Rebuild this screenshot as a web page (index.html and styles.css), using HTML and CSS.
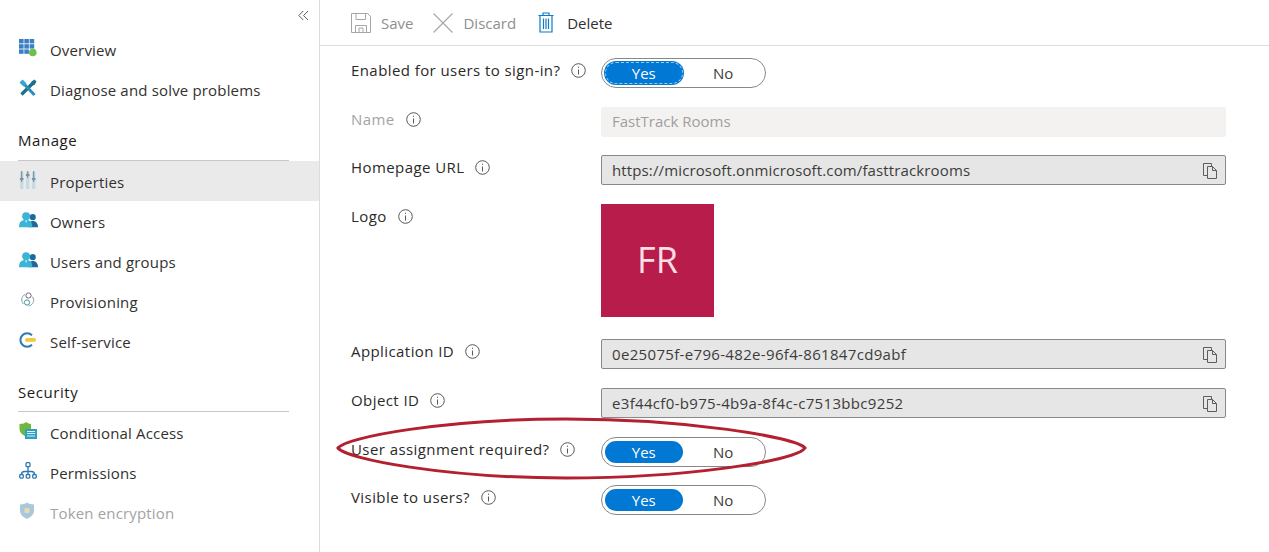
FILE: index.html
```html
<!DOCTYPE html>
<html lang="en">
<head>
<meta charset="utf-8">
<title>Properties</title>
<link rel="stylesheet" href="styles.css">
</head>
<body>
<div class="app">
  <aside class="sidebar">
    <div class="collapse"><svg width="11" height="11" viewBox="0 0 11 11"><path d="M5.200 1 .8 5.500l4.400 4.500M10 1 5.600 5.500 10 10" fill="none" stroke="#605e5c" stroke-width="1"/></svg></div>
    <nav>
      <a class="item"><svg class="ico" viewBox="0 0 18 18"><g fill="#3b80c4"><rect x="0" y="0" width="4.600" height="4.400"/><rect x="5.300" y="0" width="4.600" height="4.400"/><rect x="10.600" y="0" width="4.600" height="4.400"/><rect x="0" y="5.200" width="4.600" height="4.400"/><rect x="5.300" y="5.200" width="4.600" height="4.400"/><rect x="10.600" y="5.200" width="4.600" height="4.400"/><rect x="0" y="10.400" width="4.600" height="4.400"/><rect x="5.300" y="10.400" width="4.600" height="4.400"/></g><circle cx="13.800" cy="13.500" r="3.800" fill="#6fbf4b"/></svg><span>Overview</span></a>
      <a class="item"><svg class="ico" viewBox="0 0 18 18"><path d="M2.500 15.500 14.500 3.500" stroke="#1f6f8b" stroke-width="3.400" fill="none"/><path d="M15.500 16 5 5" stroke="#2a8fb5" stroke-width="3" fill="none"/><path d="M.5 3.500 3.600.5 7.500 4.400 4.400 7.500z" fill="#35a7d0"/><path d="M12.500 2.500 15.500.5l2 2-2 3.500-3 .5z" fill="#1f6f8b"/></svg><span>Diagnose and solve problems</span></a>
      <h2 class="heading">Manage</h2>
      <a class="item active"><svg class="ico" viewBox="0 0 18 18"><g fill="#c5dbe6"><rect x="1" y="1" width="3.400" height="17"/><rect x="7" y="1" width="3.400" height="17"/><rect x="13" y="1" width="3.400" height="17"/></g><g fill="#7d929e"><rect x="2.100" y="0" width="1.200" height="11"/><rect x="8.100" y="0" width="1.200" height="7"/><rect x="14.100" y="0" width="1.200" height="11"/><rect x=".9" y="7" width="3.600" height="2"/><rect x="6.900" y="3" width="3.600" height="2"/><rect x="12.900" y="7" width="3.600" height="2"/></g></svg><span>Properties</span></a>
      <a class="item"><svg class="ico wide" viewBox="0 0 20 18"><use href="#people"/></svg><span>Owners</span></a>
      <a class="item"><svg class="ico wide" viewBox="0 0 20 18"><g id="people"><circle cx="14.500" cy="6" r="3.200" fill="#1d6a9c"/><path d="M10 16.500c0-5 2-6.500 4.500-6.500s5.500 1.500 5.500 6.500z" fill="#1d6a9c"/><circle cx="7.500" cy="5" r="4.200" fill="#3bb4d8"/><path d="M0 16.500c0-6 3-7.500 7.500-7.500S14 11 14 16.500z" fill="#3bb4d8"/><path d="M6.200 9.500h2.600L7.500 12z" fill="#d8f2fa"/></g></svg><span>Users and groups</span></a>
      <a class="item"><svg class="ico" viewBox="0 0 18 18"><circle cx="9.500" cy="4.500" r="2.600" fill="none" stroke="#6b6b8a" stroke-width="1"/><circle cx="8" cy="11.500" r="2.600" fill="none" stroke="#3a9aa8" stroke-width="1"/><path d="M6 3.500C2.500 5 1.500 10 4.500 13M12.500 5c3 2.500 3 6 0 8.500-1 1-2 1-3 1.500" fill="none" stroke="#8a9aa8" stroke-width="1"/></svg><span>Provisioning</span></a>
      <a class="item"><svg class="ico" viewBox="0 0 18 18"><path d="M13 4.200a6.800 6.800 0 1 0 0 9.600" fill="none" stroke="#2b7cb5" stroke-width="2"/><rect x="6" y="7" width="11" height="3.800" rx="1.900" fill="#f0c93a"/></svg><span>Self-service</span></a>
      <h2 class="heading sec">Security</h2>
      <a class="item"><svg class="ico" viewBox="0 0 18 18"><path d="M.5 2C4 2 6 1 7 0c1.500 1 3.500 2 5 2v6c0 2.500-2.500 5-5 6.500C3 13 .5 10 .5 7z" fill="#6fb83f"/><rect x="6" y="7" width="12" height="10" fill="#2f9fc8"/><g fill="#d8f0f8"><rect x="8" y="9" width="8" height="1"/><rect x="8" y="11" width="8" height="1"/><rect x="8" y="13.500" width="8" height="1"/></g></svg><span>Conditional Access</span></a>
      <a class="item"><svg class="ico" viewBox="0 0 18 18"><g fill="none" stroke="#2b77ae" stroke-width="1.300"><rect x="7" y=".7" width="4" height="4" rx="1"/><rect x=".7" y="12.500" width="3.600" height="3.600" rx="1"/><rect x="7.200" y="12.500" width="3.600" height="3.600" rx="1"/><rect x="13.700" y="12.500" width="3.600" height="3.600" rx="1"/><path d="M9 4.700v7.800M2.500 12.500c0-2 1-3 3-3h7c2 0 3 1 3 3"/></g></svg><span>Permissions</span></a>
      <a class="item muted"><svg class="ico" viewBox="0 0 18 18"><path d="M1 2.500C4 2.500 6.500 1.500 8 .5c1.500 1 4 2 7 2v6.500c0 3.500-3.500 6.500-7 8-3.500-1.500-7-4.500-7-8z" fill="#a9c7dd"/><rect x="5.500" y="6" width="5" height="5" rx="1" fill="#e8dca8"/></svg><span>Token encryption</span></a>
    </nav>
  </aside>
  <main class="main">
    <header class="toolbar">
      <button class="tool off"><svg width="20" height="20" viewBox="0 0 20 20"><path d="M.5.500h16l3 3v16H.5zM5 .5v6h9.500V.5M4.500 19.500v-7h11v7M8 19.500V15h4v4.500" fill="none" stroke="#a6a6a6" stroke-width="1"/></svg><span>Save</span></button>
      <button class="tool off"><svg width="20" height="20" viewBox="0 0 20 20"><path d="m.5.500 19 19M19.500.500l-19 19" stroke="#a6a6a6" stroke-width="1.100" fill="none"/></svg><span>Discard</span></button>
      <button class="tool del"><svg width="16" height="21" viewBox="0 0 16 21"><path d="M.5 3.500h15M5 3.500V1h6v2.500M2 3.500V20h12V3.500M5.500 6.500v10.500M8 6.500v10.500M10.500 6.500v10.500" fill="none" stroke="#0f7ac7" stroke-width="1.200"/></svg><span>Delete</span></button>
    </header>
    <form class="form">
      <div class="row r19">
        <div class="label"><span>Enabled for users to sign-in?</span><svg class="info" viewBox="0 0 15 15"><use href="#i"/></svg></div>
        <div class="toggle"><span class="yes focus">Yes</span><span class="no">No</span></div>
      </div>
      <div class="row r18">
        <div class="label dim"><span>Name</span><svg class="info" viewBox="0 0 15 15"><g id="i"><circle cx="7.500" cy="7.500" r="6.800" fill="none" stroke="#484644" stroke-width=".9"/><path d="M7.500 6.500v5M7.500 3.700v1.200" stroke="#484644" stroke-width=".9"/></g></svg></div>
        <div class="field plain">FastTrack Rooms</div>
      </div>
      <div class="row r19">
        <div class="label"><span>Homepage URL</span><svg class="info" viewBox="0 0 15 15"><use href="#i"/></svg></div>
        <div class="field url">https://microsoft.onmicrosoft.com/fasttrackrooms<svg class="copy" viewBox="0 0 14 16"><use href="#c"/></svg></div>
      </div>
      <div class="row r22">
        <div class="label"><span>Logo</span><svg class="info" viewBox="0 0 15 15"><use href="#i"/></svg></div>
        <div class="logo">FR</div>
      </div>
      <div class="row r19">
        <div class="label"><span>Application ID</span><svg class="info" viewBox="0 0 15 15"><use href="#i"/></svg></div>
        <div class="field guid">0e25075f-e796-482e-96f4-861847cd9abf<svg class="copy" viewBox="0 0 14 16"><g id="c" fill="none" stroke="#605e5c" stroke-width="1"><path d="M4 12.500H.5V.5h8v3"/><path d="M4.500 3.500h5l4 4v8h-9zM9.500 3.500v4h4"/></g></svg></div>
      </div>
      <div class="row r19">
        <div class="label"><span>Object ID</span><svg class="info" viewBox="0 0 15 15"><use href="#i"/></svg></div>
        <div class="field guid">e3f44cf0-b975-4b9a-8f4c-c7513bbc9252<svg class="copy" viewBox="0 0 14 16"><use href="#c"/></svg></div>
      </div>
      <div class="row r18">
        <div class="label"><span>User assignment required?</span><svg class="info" viewBox="0 0 15 15"><use href="#i"/></svg></div>
        <div class="toggle"><span class="yes">Yes</span><span class="no">No</span></div>
      </div>
      <div class="row">
        <div class="label"><span>Visible to users?</span><svg class="info" viewBox="0 0 15 15"><use href="#i"/></svg></div>
        <div class="toggle"><span class="yes">Yes</span><span class="no">No</span></div>
      </div>
    </form>
  </main>
  <svg class="circle" width="472" height="64" viewBox="0 0 472 64"><path d="M2 31C10 20 110 2 230 2c120 0 230 18 239 29-9 13-119 30-239 30C110 61 10 42 2 31z" fill="none" stroke="#b3202f" stroke-width="3"/></svg>
</div>
</body>
</html>
```
FILE: styles.css
```css
* { box-sizing: border-box; }
html, body { margin: 0; height: 100%; overflow: hidden; background: #fff; }
body { font-family: "Open Sans", "Liberation Sans", sans-serif; font-size: 15px; color: #323130; }
.app { position: relative; display: flex; width: 1269px; height: 552px; }

.sidebar { width: 320px; flex: none; border-right: 1px solid #dcdcdc; }
.collapse { height: 29px; padding: 10px 10px 0 0; display: flex; justify-content: flex-end; }
.item { display: flex; align-items: center; height: 40px; padding: 2px 0 0 19px; gap: 13px; font-size: 15px; letter-spacing: .17px; color: #323130; }
.item.active { background: #ebeaea; }
.item.muted { color: #a3a3a3; }
.ico { width: 18px; height: 18px; flex: none; margin-top: -4px; }
.ico.wide { width: 19px; margin-right: -1px; }
.heading { margin: 0 30px 0 18px; padding-top: 21px; height: 52px; border-bottom: 1px solid #c8c8c8; font-size: 15px; font-weight: 500; letter-spacing: .55px; line-height: 20px; color: #1b1a19; }
.heading.sec { height: 51px; }

.main { flex: 1; min-width: 0; }
.toolbar { display: flex; align-items: center; height: 46px; padding-left: 31px; border-bottom: 1px solid #dedede; }
.tool { display: flex; align-items: center; padding: 0; border: 0; background: none; font: inherit; font-size: 15px; gap: 10px; margin-right: 20px; color: #323130; }
.tool.off { color: #8f8f8f; }
.tool.off + .tool.off { margin-right: 22px; }
.tool.del { gap: 13px; }
.tool span { padding-top: 1px; }

.form { padding: 12px 43px 0 31px; }
.row { display: flex; align-items: flex-start; }
.r18 { margin-bottom: 18px; }
.r19 { margin-bottom: 19px; }
.r22 { margin-bottom: 22px; }
.label { width: 250px; flex: none; display: flex; align-items: center; gap: 11px; margin-top: 2px; height: 20px; font-size: 15px; font-weight: 500; letter-spacing: .42px; color: #2b2a29; }
.label.dim { color: #a3a3a3; }
.info { width: 15px; height: 15px; flex: none; }

.toggle { display: flex; align-items: center; width: 165px; height: 30px; padding: 0 3px; border: 1px solid #8a8886; border-radius: 15px; font-size: 15px; }
.yes { width: 78px; height: 22px; border-radius: 11px; background: #0078d4; color: #fff; text-align: center; line-height: 22px; }
.yes.focus { outline: 1px dashed #8fd0f5; outline-offset: -1px; box-shadow: 0 0 0 1px #0078d4; }
.no { width: 80px; padding-left: 2px; text-align: center; color: #3d3c3b; }

.field { position: relative; flex: 1; height: 30px; padding: 0 10px; border: 1px solid #8a8886; border-radius: 2px; background: #e6e6e6; font-size: 15px; line-height: 28px; color: #3d3c3b; }
.field.url { letter-spacing: .13px; }
.field.guid { letter-spacing: .33px; }
.field.plain { background: #f3f2f1; border-color: #f3f2f1; color: #a19f9d; line-height: 26px; }
.copy { position: absolute; right: 8px; top: 7px; width: 14px; height: 16px; }
.logo { width: 113px; height: 113px; display: flex; align-items: center; justify-content: center; padding-bottom: 2px; background: #b71c4a; color: #fbdde6; font-size: 36px; line-height: 1; }

.circle { position: absolute; left: 336px; top: 417px; pointer-events: none; }
```
